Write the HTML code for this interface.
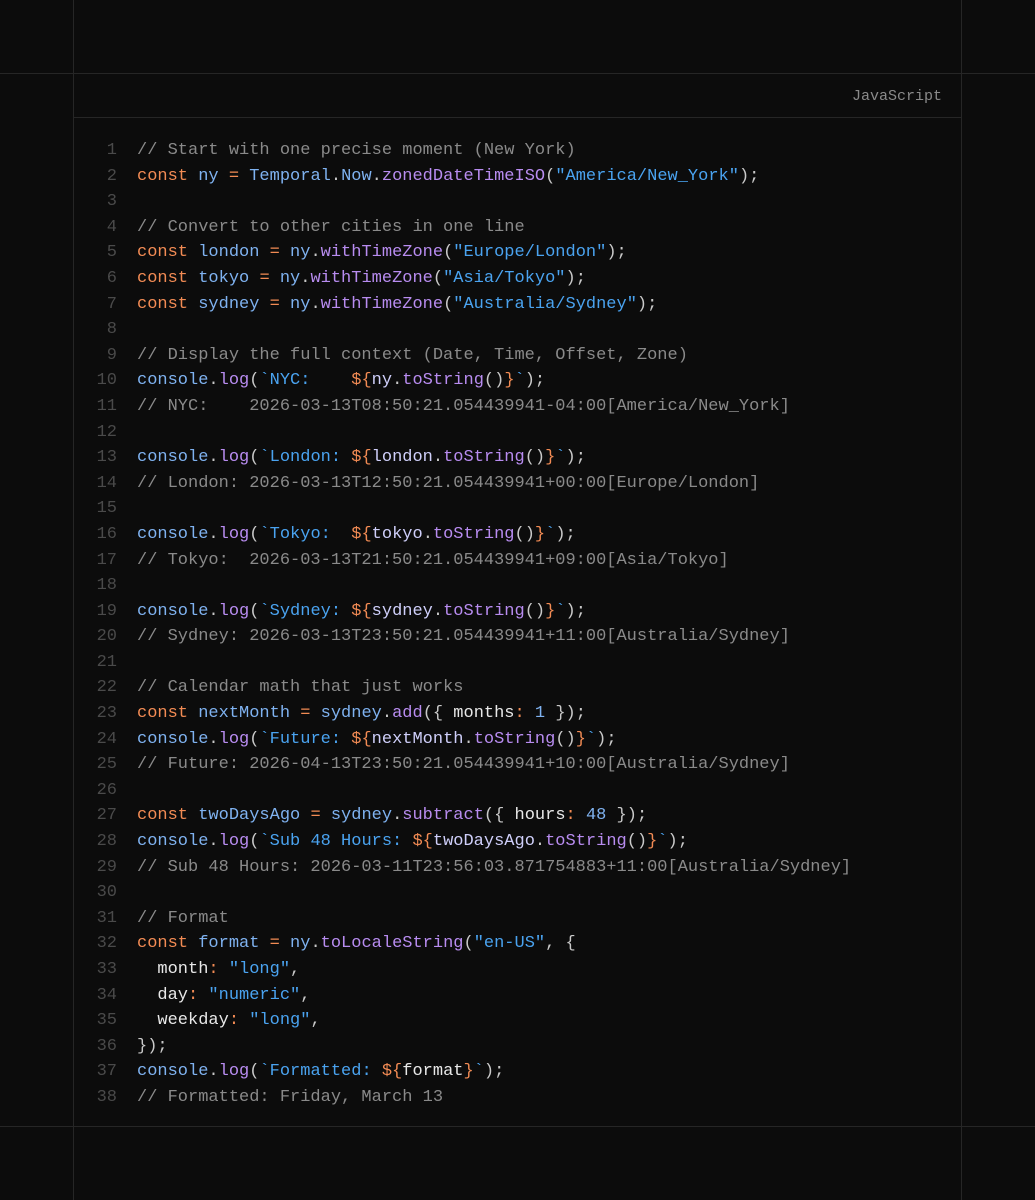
<!DOCTYPE html>
<html><head><style>
html,body{margin:0;background:#0c0c0c;width:1035px;height:1200px;overflow:hidden;position:relative}
.l{position:absolute;background:#262626}
.h{left:0;width:1035px;height:1px}
.vv{top:0;height:1200px;width:1px}
.lang{position:absolute;right:93px;top:88px;font:15px "Liberation Mono",monospace;color:#8a8a8a}
pre{position:absolute;left:96px;top:138px;margin:0;font:17px/25.6px "Liberation Mono",monospace;color:#c9c9c9}
.ln{display:inline-block;width:21px;text-align:right;color:#4a4a4a;margin-right:20px}
.k{color:#f28b54}.v{color:#7fb2f0}.f{color:#b88cf0}.s{color:#4aa3f0}.c{color:#8a8a8a}.i{color:#cfcffa}.w{color:#e8e8e8}
</style></head><body>
<div class="l h" style="top:73px"></div>
<div class="l h" style="top:117px;left:73px;width:889px"></div>
<div class="l h" style="top:1126px"></div>
<div class="l vv" style="left:73px"></div>
<div class="l vv" style="left:961px"></div>
<div class="lang">JavaScript</div>
<pre><span class="ln">1</span><span class="c">// Start with one precise moment (New York)</span>
<span class="ln">2</span><span class="k">const</span> <span class="v">ny</span> <span class="k">=</span> <span class="v">Temporal</span>.<span class="v">Now</span>.<span class="f">zonedDateTimeISO</span>(<span class="s">"America/New_York"</span>);
<span class="ln">3</span>
<span class="ln">4</span><span class="c">// Convert to other cities in one line</span>
<span class="ln">5</span><span class="k">const</span> <span class="v">london</span> <span class="k">=</span> <span class="v">ny</span>.<span class="f">withTimeZone</span>(<span class="s">"Europe/London"</span>);
<span class="ln">6</span><span class="k">const</span> <span class="v">tokyo</span> <span class="k">=</span> <span class="v">ny</span>.<span class="f">withTimeZone</span>(<span class="s">"Asia/Tokyo"</span>);
<span class="ln">7</span><span class="k">const</span> <span class="v">sydney</span> <span class="k">=</span> <span class="v">ny</span>.<span class="f">withTimeZone</span>(<span class="s">"Australia/Sydney"</span>);
<span class="ln">8</span>
<span class="ln">9</span><span class="c">// Display the full context (Date, Time, Offset, Zone)</span>
<span class="ln">10</span><span class="v">console</span>.<span class="f">log</span>(<span class="s">`NYC:    </span><span class="k">${</span><span class="i">ny</span>.<span class="f">toString</span>()<span class="k">}</span><span class="s">`</span>);
<span class="ln">11</span><span class="c">// NYC:    2026-03-13T08:50:21.054439941-04:00[America/New_York]</span>
<span class="ln">12</span>
<span class="ln">13</span><span class="v">console</span>.<span class="f">log</span>(<span class="s">`London: </span><span class="k">${</span><span class="i">london</span>.<span class="f">toString</span>()<span class="k">}</span><span class="s">`</span>);
<span class="ln">14</span><span class="c">// London: 2026-03-13T12:50:21.054439941+00:00[Europe/London]</span>
<span class="ln">15</span>
<span class="ln">16</span><span class="v">console</span>.<span class="f">log</span>(<span class="s">`Tokyo:  </span><span class="k">${</span><span class="i">tokyo</span>.<span class="f">toString</span>()<span class="k">}</span><span class="s">`</span>);
<span class="ln">17</span><span class="c">// Tokyo:  2026-03-13T21:50:21.054439941+09:00[Asia/Tokyo]</span>
<span class="ln">18</span>
<span class="ln">19</span><span class="v">console</span>.<span class="f">log</span>(<span class="s">`Sydney: </span><span class="k">${</span><span class="i">sydney</span>.<span class="f">toString</span>()<span class="k">}</span><span class="s">`</span>);
<span class="ln">20</span><span class="c">// Sydney: 2026-03-13T23:50:21.054439941+11:00[Australia/Sydney]</span>
<span class="ln">21</span>
<span class="ln">22</span><span class="c">// Calendar math that just works</span>
<span class="ln">23</span><span class="k">const</span> <span class="v">nextMonth</span> <span class="k">=</span> <span class="v">sydney</span>.<span class="f">add</span>({ <span class="w">months</span><span class="k">:</span> <span class="v">1</span> });
<span class="ln">24</span><span class="v">console</span>.<span class="f">log</span>(<span class="s">`Future: </span><span class="k">${</span><span class="i">nextMonth</span>.<span class="f">toString</span>()<span class="k">}</span><span class="s">`</span>);
<span class="ln">25</span><span class="c">// Future: 2026-04-13T23:50:21.054439941+10:00[Australia/Sydney]</span>
<span class="ln">26</span>
<span class="ln">27</span><span class="k">const</span> <span class="v">twoDaysAgo</span> <span class="k">=</span> <span class="v">sydney</span>.<span class="f">subtract</span>({ <span class="w">hours</span><span class="k">:</span> <span class="v">48</span> });
<span class="ln">28</span><span class="v">console</span>.<span class="f">log</span>(<span class="s">`Sub 48 Hours: </span><span class="k">${</span><span class="i">twoDaysAgo</span>.<span class="f">toString</span>()<span class="k">}</span><span class="s">`</span>);
<span class="ln">29</span><span class="c">// Sub 48 Hours: 2026-03-11T23:56:03.871754883+11:00[Australia/Sydney]</span>
<span class="ln">30</span>
<span class="ln">31</span><span class="c">// Format</span>
<span class="ln">32</span><span class="k">const</span> <span class="v">format</span> <span class="k">=</span> <span class="v">ny</span>.<span class="f">toLocaleString</span>(<span class="s">"en-US"</span>, {
<span class="ln">33</span>  <span class="w">month</span><span class="k">:</span> <span class="s">"long"</span>,
<span class="ln">34</span>  <span class="w">day</span><span class="k">:</span> <span class="s">"numeric"</span>,
<span class="ln">35</span>  <span class="w">weekday</span><span class="k">:</span> <span class="s">"long"</span>,
<span class="ln">36</span>});
<span class="ln">37</span><span class="v">console</span>.<span class="f">log</span>(<span class="s">`Formatted: </span><span class="k">${</span><span class="w">format</span><span class="k">}</span><span class="s">`</span>);
<span class="ln">38</span><span class="c">// Formatted: Friday, March 13</span></pre>
</body></html>
